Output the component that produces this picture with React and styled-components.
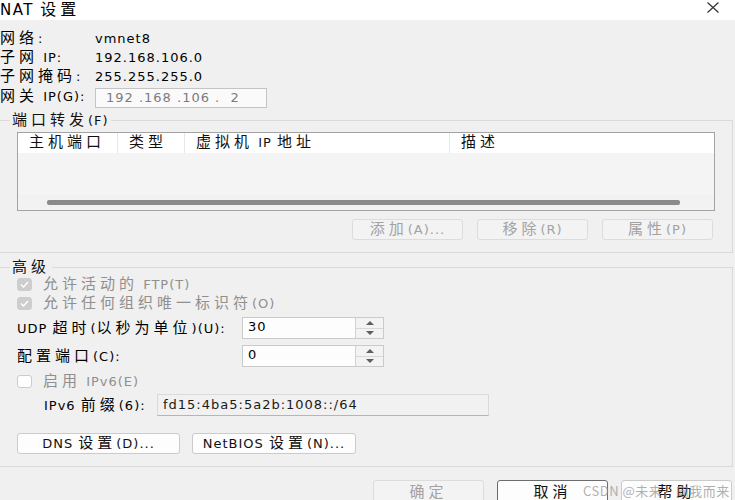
import styled, { createGlobalStyle } from "styled-components";

const GlobalStyle = createGlobalStyle`
  html, body {
    margin: 0;
    padding: 0;
  }
  body {
    width: 735px;
    height: 500px;
    overflow: hidden;
    background: #f0f0f0;
    font-family: "DejaVu Sans", "Noto Sans CJK SC", sans-serif;
    font-size: 13px;
    line-height: 19px;
    letter-spacing: 1px;
    color: #111;
  }
`;

const Han = styled.span`
  font-family: "Noto Sans CJK SC", sans-serif;
  font-size: ${(p) => p.$size || 15}px;
  line-height: 1;
  letter-spacing: 4px;
`;

// wide CJK runs get their own span so Latin and Han can be spaced separately
function T({ children, size }) {
  const parts = String(children).split(/([\u3000-\u9fff\uff00-\uffef]+)/);
  return (
    <span>
      {parts.map((p, i) =>
        i % 2 ? (
          <Han key={i} $size={size}>
            {p}
          </Han>
        ) : (
          p
        )
      )}
    </span>
  );
}

const Window = styled.div`
  width: 735px;
  height: 500px;
  display: flex;
  flex-direction: column;
  position: relative;
  overflow: hidden;
`;

const TitleBar = styled.div`
  height: 20px;
  flex: none;
  background: #fff;
  display: flex;
  justify-content: space-between;
  align-items: flex-start;
  padding-right: 16px;
`;

const Title = styled.div`
  font-size: 15px;
  line-height: 16px;
  letter-spacing: 1.5px;
  color: #000;
`;

const Close = styled.svg`
  margin-top: 2px;
`;

const Body = styled.div`
  flex: 1;
  padding-top: 9px;
`;

const InfoGrid = styled.div`
  display: grid;
  grid-template-columns: 95px auto;
  grid-template-rows: 19px 19px 19px 21px;
  justify-content: start;
  align-items: center;
  color: #000;
`;

const IpBox = styled.div`
  margin-top: 2px;
  width: 172px;
  height: 20px;
  box-sizing: border-box;
  border: 1px solid #c4c4c4;
  background: #fafafa;
  color: #7c7c7c;
  padding-left: 10px;
  white-space: pre;
  display: flex;
  align-items: center;
`;

const Group = styled.fieldset`
  margin: ${(p) => p.$mt}px 0 0 -2px;
  width: 735px;
  box-sizing: border-box;
  border: 1px solid #dadada;
  padding: ${(p) => p.$pt}px 17px 12px 18px;
  min-width: 0;
`;

const Legend = styled.legend`
  margin-left: -7px;
  padding: 0 2px;
  height: 19px;
  color: #111;
`;

const Table = styled.div`
  height: 79px;
  box-sizing: border-box;
  border: 1px solid #a3a3a3;
  background: #f4f4f4;
  display: flex;
  flex-direction: column;
`;

const HeaderRow = styled.div`
  height: 20px;
  background: #fff;
  display: grid;
  grid-template-columns: 100px 67px 265px 1fr;
`;

const HeaderCell = styled.div`
  padding-left: 11px;
  border-right: 1px solid #e6e6e6;
  line-height: 20px;
  color: #111;
  &:last-child {
    border-right: none;
  }
`;

const TableSpace = styled.div`
  flex: 1;
`;

const ScrollTrack = styled.div`
  height: 16px;
  display: flex;
  align-items: center;
  padding-left: 29px;
  background: #f2f2f2;
  border-top: 1px solid #f7f7f7;
`;

const Thumb = styled.div`
  width: 633px;
  height: 5px;
  border-radius: 2px;
  background: #8b8b8b;
`;

const ButtonRow = styled.div`
  display: flex;
  justify-content: ${(p) => (p.$start ? "flex-start" : "flex-end")};
  gap: ${(p) => p.$gap}px;
  margin-top: ${(p) => p.$mt}px;
  padding-right: ${(p) => p.$pr || 0}px;
`;

const Button = styled.button`
  width: ${(p) => p.$w || 111}px;
  height: ${(p) => p.$h || 21}px;
  box-sizing: border-box;
  padding: 0;
  font: inherit;
  letter-spacing: inherit;
  line-height: 19px;
  border-radius: 3px;
  border: 1px solid
    ${(p) =>
      p.$kind === "default" ? "#6c6c6c" : p.disabled ? "#dcdcdc" : "#cbcbcb"};
  background: ${(p) => (p.disabled ? "#f3f3f3" : "#fdfdfd")};
  color: ${(p) => (p.disabled ? "#a2a2a2" : "#111")};
`;

const CheckRow = styled.div`
  height: 19px;
  display: flex;
  align-items: center;
  gap: 11px;
  margin-top: ${(p) => p.$mt || 0}px;
  color: #8f8f8f;
`;

const Box = styled.span`
  width: 15px;
  height: 13px;
  box-sizing: border-box;
  border-radius: 3px;
  display: flex;
  align-items: center;
  justify-content: center;
  background: ${(p) => (p.$checked ? "#cdcdcd" : "#fff")};
  border: 1px solid ${(p) => (p.$checked ? "#cdcdcd" : "#cbcbcb")};
`;

const FieldRow = styled.div`
  display: flex;
  align-items: center;
  margin-top: ${(p) => p.$mt}px;
  padding-left: ${(p) => p.$indent || 0}px;
  color: #000;
`;

const FieldLabel = styled.div`
  width: ${(p) => p.$w}px;
  flex: none;
`;

const SpinBox = styled.div`
  width: 142px;
  height: 22px;
  box-sizing: border-box;
  border: 1px solid #cacaca;
  background: #fdfdfd;
  display: flex;
`;

const SpinValue = styled.div`
  flex: 1;
  padding-left: 5px;
  line-height: 18px;
  color: #000;
`;

const SpinButtons = styled.div`
  width: 27px;
  display: flex;
  flex-direction: column;
  border-left: 1px solid #d2d2d2;
`;

const SpinHalf = styled.div`
  flex: 1;
  display: flex;
  align-items: center;
  justify-content: center;
  background: #f3f3f3;
  & + & {
    border-top: 1px solid #d8d8d8;
  }
`;

const PrefixBox = styled.div`
  width: 332px;
  height: 22px;
  box-sizing: border-box;
  border: 1px solid #dadada;
  border-bottom-color: #b5b5b5;
  background: #f1f1f1;
  padding-left: 5px;
  line-height: 19px;
  color: #1a1a1a;
`;

const Watermark = styled.div`
  position: absolute;
  left: 583px;
  top: 481px;
  font-family: "Noto Sans CJK SC", sans-serif;
  font-size: 13px;
  letter-spacing: 0.5px;
  color: rgba(150, 150, 150, 0.75);
  white-space: nowrap;
`;

const Arrow = ({ up }) => (
  <svg width="8" height="4" viewBox="0 0 8 4">
    <path d={up ? "M0 4 L4 0 L8 4 Z" : "M0 0 L8 0 L4 4 Z"} fill="#5f5f5f" />
  </svg>
);

const Check = ({ checked, children, mt }) => (
  <CheckRow $mt={mt}>
    <Box $checked={checked}>
      {checked && (
        <svg width="9" height="7" viewBox="0 0 9 7">
          <path d="M1 3.5 L3.5 6 L8 1" stroke="#fff" strokeWidth="1.4" fill="none" />
        </svg>
      )}
    </Box>
    <T>{children}</T>
  </CheckRow>
);

const Spin = ({ label, value, mt }) => (
  <FieldRow $mt={mt}>
    <FieldLabel $w={225}>
      <T>{label}</T>
    </FieldLabel>
    <SpinBox>
      <SpinValue>{value}</SpinValue>
      <SpinButtons>
        <SpinHalf>
          <Arrow up />
        </SpinHalf>
        <SpinHalf>
          <Arrow />
        </SpinHalf>
      </SpinButtons>
    </SpinBox>
  </FieldRow>
);

const columns = ["主机端口", "类型", "虚拟机 IP 地址", "描述"];

export default function App() {
  return (
    <Window>
      <GlobalStyle />
      <TitleBar>
        <Title>
          <T size={16}>NAT 设置</T>
        </Title>
        <Close width="12" height="11" viewBox="0 0 12 11">
          <path d="M0.5 0.5 L11.5 10.5 M11.5 0.5 L0.5 10.5" stroke="#333" strokeWidth="1.2" />
        </Close>
      </TitleBar>
      <Body>
        <InfoGrid>
          <T>网络:</T>
          <span>vmnet8</span>
          <T>子网 IP:</T>
          <span>192.168.106.0</span>
          <T>子网掩码:</T>
          <span>255.255.255.0</span>
          <T>网关 IP(G):</T>
          <IpBox>192 .168 .106 .  2</IpBox>
        </InfoGrid>

        <Group $mt={4} $pt={2}>
          <Legend>
            <T>端口转发(F)</T>
          </Legend>
          <Table>
            <HeaderRow>
              {columns.map((c) => (
                <HeaderCell key={c}>
                  <T>{c}</T>
                </HeaderCell>
              ))}
            </HeaderRow>
            <TableSpace />
            <ScrollTrack>
              <Thumb />
            </ScrollTrack>
          </Table>
          <ButtonRow $gap={14} $mt={8} $pr={2}>
            <Button disabled>
              <T>添加(A)...</T>
            </Button>
            <Button disabled>
              <T>移除(R)</T>
            </Button>
            <Button disabled>
              <T>属性(P)</T>
            </Button>
          </ButtonRow>
        </Group>

        <Group $mt={5} $pt={0}>
          <Legend>
            <T>高级</T>
          </Legend>
          <Check checked mt={-2}>
            允许活动的 FTP(T)
          </Check>
          <Check checked>允许任何组织唯一标识符(O)</Check>
          <Spin label="UDP 超时(以秒为单位)(U):" value="30" mt={4} />
          <Spin label="配置端口(C):" value="0" mt={6} />
          <Check mt={5}>启用 IPv6(E)</Check>
          <FieldRow $mt={3} $indent={27}>
            <FieldLabel $w={113}>
              <T>IPv6 前缀(6):</T>
            </FieldLabel>
            <PrefixBox>fd15:4ba5:5a2b:1008::/64</PrefixBox>
          </FieldRow>
          <ButtonRow $start $gap={12} $mt={17}>
            <Button $w={163}>
              <T>DNS 设置(D)...</T>
            </Button>
            <Button $w={164}>
              <T>NetBIOS 设置(N)...</T>
            </Button>
          </ButtonRow>
        </Group>

        <ButtonRow $gap={13} $mt={13} $pr={3}>
          <Button disabled $h={24}>
            <T>确定</T>
          </Button>
          <Button $kind="default" $h={24}>
            <T>取消</T>
          </Button>
          <Button $h={24}>
            <T>帮助</T>
          </Button>
        </ButtonRow>
      </Body>
      <Watermark>CSDN @未来，向我而来</Watermark>
    </Window>
  );
}
